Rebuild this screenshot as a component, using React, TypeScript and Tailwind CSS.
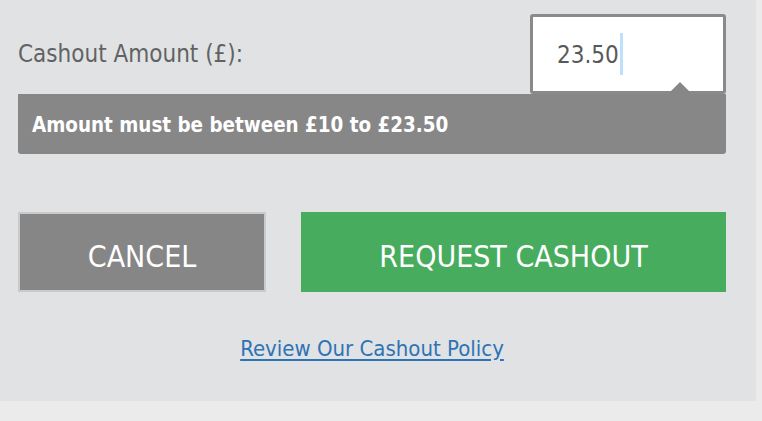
export default function App() {
  const font = { fontFamily: '"DejaVu Sans Condensed", "DejaVu Sans", sans-serif' };
  return (
    <div className="w-[762px] h-[421px] bg-[#ebebec]" style={font}>
      <div className="w-[756px] h-[401px] bg-[#e1e2e4] pl-[18px] pr-[30px] pt-[14px]">
        <div className="flex items-center justify-between h-[80px]">
          <label className="text-[24px] text-[#616264] leading-none">Cashout Amount (£):</label>
          <div className="w-[196px] h-[80px] border-[3px] border-[#8a8a8a] rounded-[3px] bg-white pl-[24px] flex items-center">
            <span className="text-[24px] text-[#58595b] leading-none pt-[1px]">23.50</span>
            <span className="w-[3px] h-[42px] bg-[#bfe0fb] ml-[1px]" />
          </div>
        </div>
        <div className="relative h-[60px] bg-[#878787] rounded-b-[3px] flex items-center pl-[14px] pt-[3px]">
          <div className="absolute left-[650px] -top-[12px] w-0 h-0 border-l-[12px] border-r-[12px] border-b-[12px] border-l-transparent border-r-transparent border-b-[#878787]" />
          <span className="text-[20.4px] font-bold text-white leading-none">Amount must be between £10 to £23.50</span>
        </div>
        <div className="flex gap-[35px] mt-[58px]">
          <button className="w-[248px] h-[80px] border-2 border-[#c9cacb] bg-[#868686] text-white text-[30px] leading-none flex items-center justify-center pt-[9px]">
            CANCEL
          </button>
          <button className="flex-1 h-[80px] bg-[#48ac5e] text-white text-[30px] leading-none flex items-center justify-center pt-[9px]">
            REQUEST CASHOUT
          </button>
        </div>
        <div className="flex justify-center mt-[42px]">
          <a href="#" className="text-[22px] text-[#2e73b6] underline leading-[30px] underline-offset-[3px]">Review Our Cashout Policy</a>
        </div>
      </div>
    </div>
  );
}
